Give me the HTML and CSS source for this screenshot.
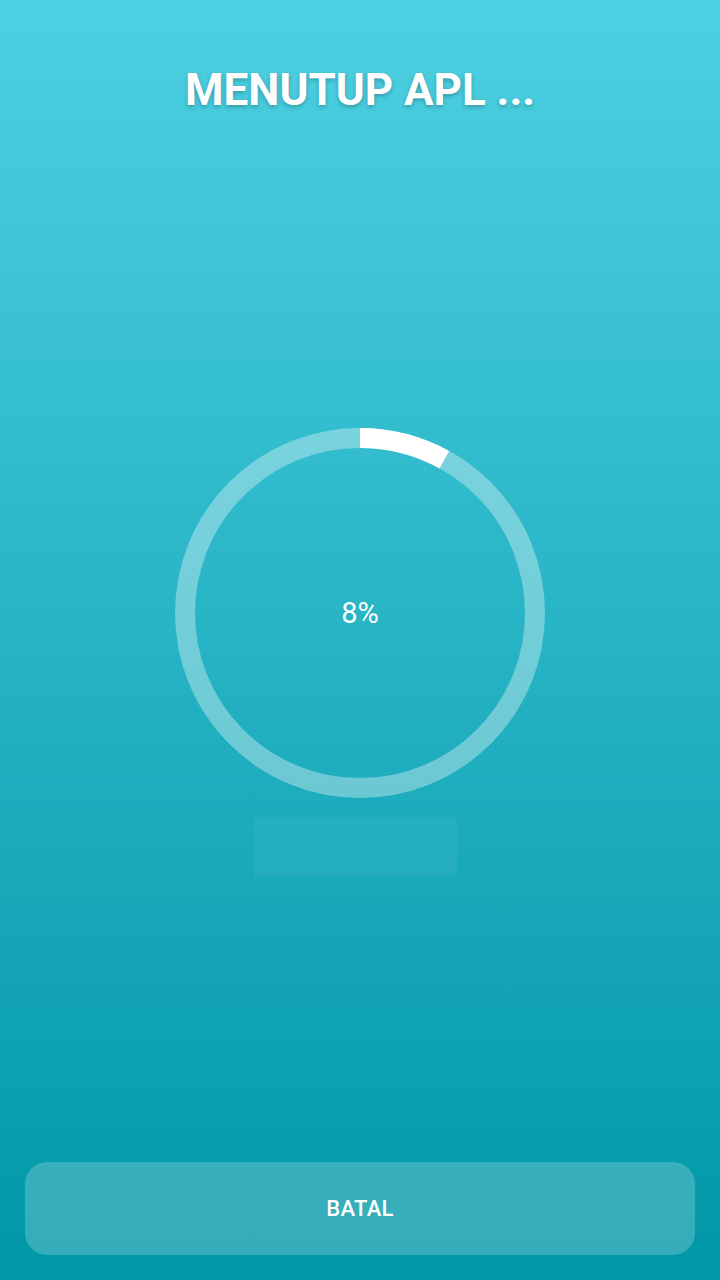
FILE: index.html
```html
<!DOCTYPE html>
<html lang="id">
<head>
<meta charset="utf-8">
<title>Menutup Apl</title>
<link rel="stylesheet" href="styles.css">
</head>
<body>
<div class="screen">
  <h1 class="title">MENUTUP APL ...</h1>
  <div class="ring">
    <svg width="370" height="370" viewBox="0 0 370 370">
      <circle class="track" cx="185" cy="185" r="175"/>
      <circle class="bar" cx="185" cy="185" r="175" stroke-dasharray="87.96 1099.56" transform="rotate(-90 185 185)"/>
    </svg>
    <div class="pct">8%</div>
  </div>
  <div class="ghost"></div>
  <button class="cancel">BATAL</button>
</div>
</body>
</html>
```
FILE: styles.css
```css
html, body {
  margin: 0;
  padding: 0;
}
body {
  font-family: Roboto, "Noto Sans", sans-serif;
}
.screen {
  width: 720px;
  height: 1280px;
  display: flex;
  flex-direction: column;
  align-items: center;
  background: linear-gradient(to bottom, #4dd0e2 0%, #0097a7 100%);
  overflow: hidden;
}
.title {
  margin: 62px 0 0;
  font-size: 44px;
  line-height: 56px;
  font-weight: 700;
  color: #ffffff;
  text-shadow: 0 2px 4px rgba(0, 0, 0, 0.25);
  letter-spacing: 0;
}
.ring {
  margin-top: 310px;
  width: 370px;
  height: 370px;
  position: relative;
}
.ring svg {
  display: block;
}
.track {
  fill: none;
  stroke: rgba(255, 255, 255, 0.35);
  stroke-width: 20;
}
.bar {
  fill: none;
  stroke: #ffffff;
  stroke-width: 20;
}
.pct {
  position: absolute;
  inset: 0;
  display: flex;
  align-items: center;
  justify-content: center;
  color: #ffffff;
  font-size: 29px;
  font-weight: 400;
}
.ghost {
  margin-top: 21px;
  margin-right: 9px;
  width: 203px;
  height: 58px;
  background: rgba(255, 255, 255, 0.05);
}
.cancel {
  margin-top: auto;
  margin-bottom: 25px;
  width: 670px;
  height: 93px;
  border: none;
  border-radius: 22px;
  background: rgba(255, 255, 255, 0.2);
  color: #ffffff;
  font-family: Roboto, "Noto Sans", sans-serif;
  font-size: 22px;
  font-weight: 500;
  letter-spacing: 0.3px;
}
```
